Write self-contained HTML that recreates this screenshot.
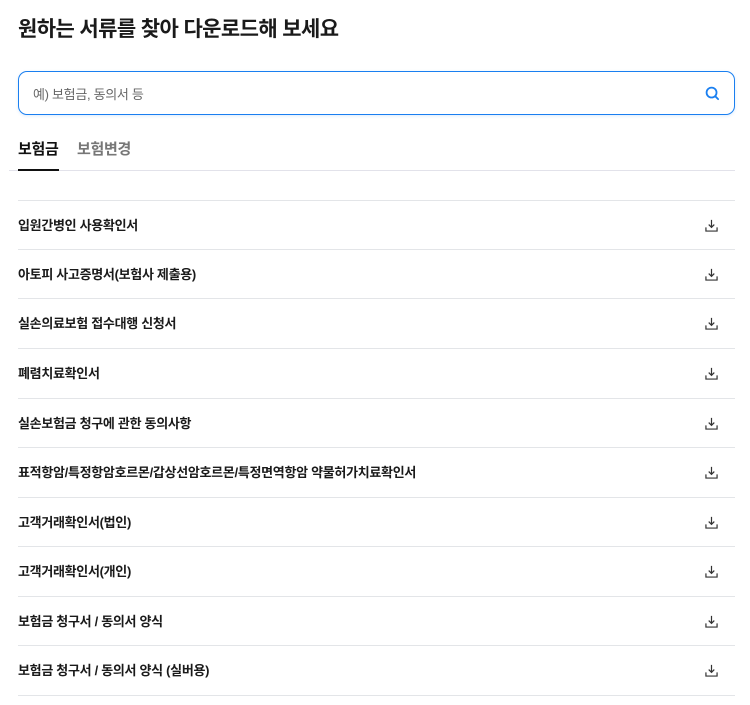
<!DOCTYPE html>
<html><head><meta charset="utf-8"><style>
*{margin:0;padding:0;box-sizing:border-box}
body{width:750px;height:705px;background:#fff;font-family:"Liberation Sans","Noto Sans CJK KR",sans-serif;color:#111;position:relative;overflow:hidden}
h1{position:absolute;left:18px;top:13px;font-size:21px;font-weight:700;letter-spacing:-0.6px;color:#1a1a1a}
.search{position:absolute;left:18px;top:71px;width:717px;height:44px;border:1px solid #1a7ff0;border-radius:9px;box-shadow:0 1px 3px rgba(26,127,240,.15)}
.search span{position:absolute;left:14px;top:12px;font-size:13px;color:#666;letter-spacing:-0.3px}
.search svg{position:absolute;right:14px;top:14px}
.tab{position:absolute;top:138px;font-size:15px;font-weight:700;letter-spacing:-0.3px}
.tabline{position:absolute;left:9px;top:170px;width:726px;height:1px;background:#e2e2ea}
.under{position:absolute;left:18px;top:169px;width:41px;height:2px;background:#111}
.row{position:absolute;left:18px;width:717px;height:50px;border-top:1px solid #e3e5e8;font-size:13px;font-weight:700;line-height:49px;color:#1a1a1a;letter-spacing:-0.3px}
.row svg{position:absolute;right:17px;top:18px}
.last{position:absolute;left:18px;top:695px;width:717px;height:1px;background:#e3e5e8}
</style></head><body>
<h1>원하는 서류를 찾아 다운로드해 보세요</h1>
<div class="search"><span>예) 보험금, 동의서 등</span>
<svg width="15" height="15" viewBox="0 0 16 16" fill="none" stroke="#1a7ff0" stroke-width="1.9" stroke-linecap="round"><circle cx="7" cy="7" r="5.3"/><path d="M11 11l3 3"/></svg></div>
<div class="tab" style="left:18px">보험금</div>
<div class="tab" style="left:77px;color:#777">보험변경</div>
<div class="tabline"></div><div class="under"></div>
<div class="row" style="top:200px">입원간병인 사용확인서<svg width="13" height="13" viewBox="0 0 14 14" fill="none" stroke="#333" stroke-width="1.3"><path d="M7 1v8M4 6l3 3 3-3M1 9v4h12V9"/></svg></div>
<div class="row" style="top:249px">아토피 사고증명서(보험사 제출용)<svg width="13" height="13" viewBox="0 0 14 14" fill="none" stroke="#333" stroke-width="1.3"><path d="M7 1v8M4 6l3 3 3-3M1 9v4h12V9"/></svg></div>
<div class="row" style="top:298px">실손의료보험 접수대행 신청서<svg width="13" height="13" viewBox="0 0 14 14" fill="none" stroke="#333" stroke-width="1.3"><path d="M7 1v8M4 6l3 3 3-3M1 9v4h12V9"/></svg></div>
<div class="row" style="top:348px">폐렴치료확인서<svg width="13" height="13" viewBox="0 0 14 14" fill="none" stroke="#333" stroke-width="1.3"><path d="M7 1v8M4 6l3 3 3-3M1 9v4h12V9"/></svg></div>
<div class="row" style="top:398px">실손보험금 청구에 관한 동의사항<svg width="13" height="13" viewBox="0 0 14 14" fill="none" stroke="#333" stroke-width="1.3"><path d="M7 1v8M4 6l3 3 3-3M1 9v4h12V9"/></svg></div>
<div class="row" style="top:447px">표적항암/특정항암호르몬/갑상선암호르몬/특정면역항암 약물허가치료확인서<svg width="13" height="13" viewBox="0 0 14 14" fill="none" stroke="#333" stroke-width="1.3"><path d="M7 1v8M4 6l3 3 3-3M1 9v4h12V9"/></svg></div>
<div class="row" style="top:497px">고객거래확인서(법인)<svg width="13" height="13" viewBox="0 0 14 14" fill="none" stroke="#333" stroke-width="1.3"><path d="M7 1v8M4 6l3 3 3-3M1 9v4h12V9"/></svg></div>
<div class="row" style="top:546px">고객거래확인서(개인)<svg width="13" height="13" viewBox="0 0 14 14" fill="none" stroke="#333" stroke-width="1.3"><path d="M7 1v8M4 6l3 3 3-3M1 9v4h12V9"/></svg></div>
<div class="row" style="top:596px">보험금 청구서 / 동의서 양식<svg width="13" height="13" viewBox="0 0 14 14" fill="none" stroke="#333" stroke-width="1.3"><path d="M7 1v8M4 6l3 3 3-3M1 9v4h12V9"/></svg></div>
<div class="row" style="top:645px">보험금 청구서 / 동의서 양식 (실버용)<svg width="13" height="13" viewBox="0 0 14 14" fill="none" stroke="#333" stroke-width="1.3"><path d="M7 1v8M4 6l3 3 3-3M1 9v4h12V9"/></svg></div>
<div class="last"></div>
</body></html>
